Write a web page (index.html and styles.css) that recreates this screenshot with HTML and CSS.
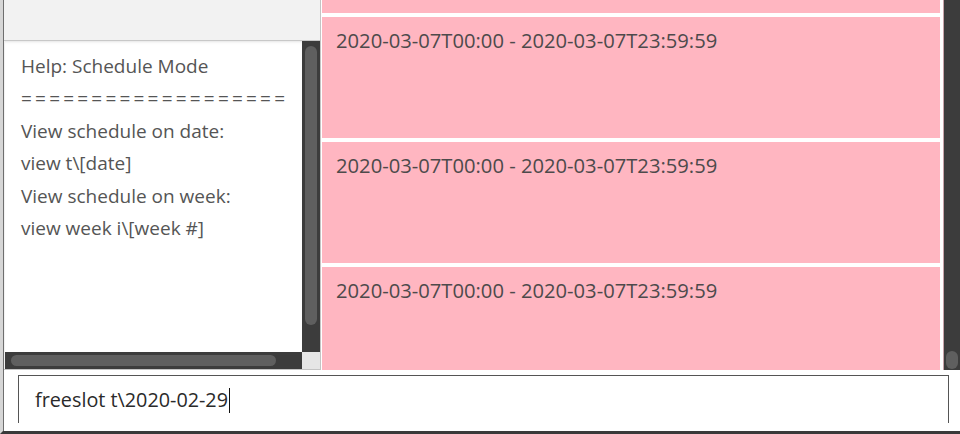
FILE: index.html
```html
<!DOCTYPE html>
<html>
<head>
<meta charset="utf-8">
<link rel="stylesheet" href="styles.css">
</head>
<body>
<div class="app">
  <div class="frame">
    <div class="main">
      <div class="left">
        <div class="top"></div>
        <div class="helpbox">
          <div class="helptext">
            <div>Help: Schedule Mode</div>
            <div class="rule">===================</div>
            <div>View schedule on date:</div>
            <div>view t\[date]</div>
            <div>View schedule on week:</div>
            <div>view week i\[week #]</div>
          </div>
          <div class="vbar"><div class="vthumb"></div></div>
          <div class="hbar"><div class="hthumb"></div></div>
          <div class="corner"></div>
        </div>
      </div>
      <div class="right">
        <div class="list">
          <div class="cell cell-partial"></div>
          <div class="cell">2020-03-07T00:00 - 2020-03-07T23:59:59</div>
          <div class="cell">2020-03-07T00:00 - 2020-03-07T23:59:59</div>
          <div class="cell">2020-03-07T00:00 - 2020-03-07T23:59:59</div>
        </div>
        <div class="rbar"><div class="rthumb"></div></div>
      </div>
    </div>
    <div class="cmdarea">
      <div class="cmdbox">freeslot t\2020-02-29<span class="caret"></span></div>
    </div>
  </div>
</div>
</body>
</html>
```
FILE: styles.css
```css
html, body {
  margin: 0;
  padding: 0;
  background: #ffffff;
}
body {
  width: 960px;
  height: 434px;
  overflow: hidden;
  font-family: "Open Sans", "Noto Sans", sans-serif;
}
.app {
  border-left: 3px solid #d6d6d6;
  border-bottom: 3px solid #3a3a3a;
  box-sizing: border-box;
  height: 434px;
}
.frame {
  height: 100%;
  border-left: 1px solid #6e6e6e;
  display: flex;
  flex-direction: column;
}
.main {
  height: 370px;
  display: flex;
  flex: none;
}
.left {
  width: 317px;
  display: flex;
  flex-direction: column;
  border-right: 1px solid #c4c4c4;
  border-bottom: 1px solid #c4c4c4;
  box-sizing: border-box;
  background: #f2f2f2;
}
.top {
  height: 40px;
  flex: none;
  background: #f2f2f2;
  border-bottom: 1px solid #c8c8c8;
}
.helpbox {
  flex: 1;
  display: grid;
  grid-template-columns: 1fr 18px;
  grid-template-rows: 1fr 17px;
  min-height: 0;
  background: #ffffff;
  margin-left: 1px;
}
.helptext {
  padding: 9px 0 0 16px;
  font-size: 19px;
  line-height: 32.4px;
  color: #555555;
  overflow: hidden;
  white-space: nowrap;
  box-shadow: inset 0 3px 3px -2px #e4e4e4;
}
.rule {
  letter-spacing: 3.2px;
}
.vbar {
  background: #3c3c3c;
  padding: 5px 3px 0 3px;
}
.vthumb {
  height: 279px;
  background: #5f5f5f;
  border-radius: 6px;
}
.hbar {
  background: #3c3c3c;
  padding: 3px 0 0 6px;
}
.hthumb {
  width: 265px;
  height: 11px;
  background: #5f5f5f;
  border-radius: 6px;
}
.corner {
  background: #e6e6e6;
}
.right {
  flex: 1;
  display: flex;
  margin-left: 1px;
  background: #ffffff;
}
.list {
  width: 618px;
  flex: none;
  display: flex;
  flex-direction: column;
  gap: 4px;
  overflow: hidden;
  border-right: 3px solid #ffffff;
}
.cell {
  flex: none;
  height: 121px;
  background: #ffb6c1;
  color: #4d4a4b;
  font-size: 20.2px;
  line-height: 24px;
  padding: 11px 0 0 14px;
  box-sizing: border-box;
  white-space: nowrap;
}
.cell-partial {
  height: 13px;
  padding: 0;
}
.rbar {
  flex: 1;
  background: #3c3c3c;
  border-left: 1px solid #c8a4aa;
  position: relative;
}
.rthumb {
  position: absolute;
  left: 2px;
  right: 2px;
  bottom: 1px;
  height: 18px;
  background: #5f5f5f;
  border-radius: 6px;
}
.cmdarea {
  flex: 1;
  padding: 5px 11px 0 14px;
  background: #ffffff;
}
.cmdbox {
  height: 48px;
  border: 1px solid #555555;
  border-bottom: none;
  box-sizing: border-box;
  padding: 11px 0 0 16px;
  font-size: 19.8px;
  line-height: 26px;
  color: #2a2a2a;
  white-space: nowrap;
}
.caret {
  display: inline-block;
  width: 1px;
  height: 25px;
  background: #111111;
  vertical-align: -6px;
  margin-left: 1px;
}
```
